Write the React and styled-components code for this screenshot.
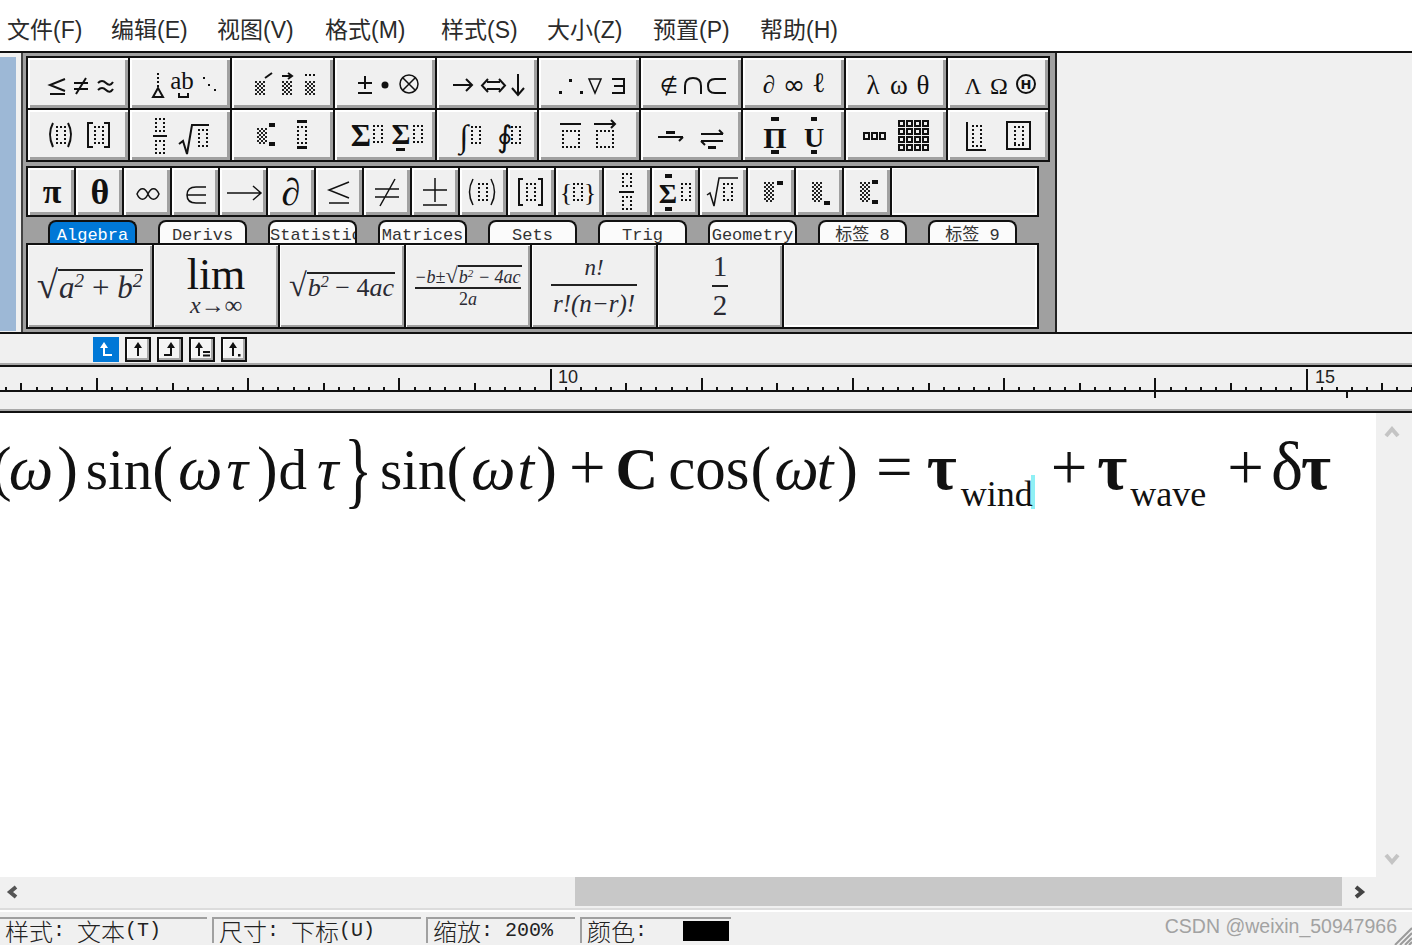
import React from "react";
import styled, { createGlobalStyle } from "styled-components";

const Global = createGlobalStyle`
  html, body { margin: 0; padding: 0; background: #f0f0f0; overflow: hidden; }
`;

const Page = styled.div`
  position: relative;
  width: 1412px;
  height: 945px;
  overflow: hidden;
  display: flex;
  flex-direction: column;
  background: #f0f0f0;
  font-family: "Liberation Sans", "Noto Sans CJK SC", sans-serif;
`;

const MenuBar = styled.div`
  height: 53px;
  flex: none;
  box-sizing: border-box;
  background: #fff;
  display: flex;
  align-items: flex-end;
  padding: 0 0 7px 7px;
  border-bottom: 2px solid #111;
`;

const MenuItem = styled.span`
  width: ${(p) => p.$w}px;
  flex: none;
  font-size: 23px;
  line-height: 28px;
  color: #2b2b2b;
  white-space: nowrap;
`;

const ToolArea = styled.div`
  height: 281px;
  flex: none;
  display: flex;
  box-sizing: border-box;
  border-bottom: 2px solid #111;
`;

const DockStrip = styled.div`
  width: 16px;
  margin: 4px 5px 1px 0;
  background: #9db8d6;
  flex: none;
`;

const Palette = styled.div`
  width: 1034px;
  flex: none;
  box-sizing: border-box;
  background: #a0a0a0;
  border-left: 2px solid #444;
  padding: 3px 0 0 3px;
  display: flex;
  flex-direction: column;
`;

const SideBlank = styled.div`
  flex: 1;
  border-left: 2px solid #222;
  background: #f0f0f0;
`;

const TemplateGrid = styled.div`
  width: 1024px;
  box-sizing: border-box;
  display: grid;
  grid-template-columns: repeat(10, 1fr);
  grid-auto-rows: 50px;
  gap: 2px;
  padding: 2px;
  background: #111;
`;

const SymbolRow = styled.div`
  width: 1013px;
  margin-top: 4px;
  box-sizing: border-box;
  display: grid;
  grid-template-columns: repeat(18, 46px) 1fr;
  grid-auto-rows: 47px;
  gap: 2px;
  padding: 2px;
  background: #111;
`;

const Btn = styled.div`
  display: flex;
  align-items: flex-start;
  justify-content: flex-start;
  overflow: hidden;
  background: #f0f0f0;
  box-shadow: inset 2px 2px 0 #fff, inset -3px -3px 0 #a0a0a0;
  svg { display: block; }
`;

const PlainCell = styled.div`
  background: #f0f0f0;
  box-shadow: inset 1px 1px 0 #fff, inset -2px -2px 0 #fff;
`;

const TabRow = styled.div`
  height: 23px;
  margin-top: 3px;
  display: flex;
  gap: 21px;
  padding-left: 22px;
`;

const Tab = styled.div`
  width: 89px;
  box-sizing: border-box;
  height: 23px;
  border: 2px solid #111;
  border-bottom: none;
  border-radius: 8px 8px 0 0;
  background: ${(p) => (p.$on ? "#0078d7" : "#fbfbfb")};
  color: ${(p) => (p.$on ? "#fff" : "#333")};
  font-family: "Liberation Mono", "Noto Sans CJK SC", monospace;
  font-size: 17px;
  line-height: 27px;
  text-align: center;
  white-space: nowrap;
  overflow: hidden;
`;

const FormulaGrid = styled.div`
  width: 1013px;
  box-sizing: border-box;
  display: grid;
  grid-template-columns: repeat(6, 124px) 1fr;
  grid-auto-rows: 82px;
  gap: 2px;
  padding: 2px;
  background: #111;
`;

const FormulaCell = styled.div`
  display: flex;
  flex-direction: column;
  align-items: center;
  justify-content: center;
  background: #f0f0f0;
  box-shadow: inset 1px 1px 0 #fff, inset -2px -2px 0 #a0a0a0;
  font-family: "Liberation Serif", serif;
  color: #2a2a33;
  white-space: nowrap;
  overflow: hidden;
`;

const Expr = styled.span`
  display: inline-flex;
  align-items: baseline;
  font-size: ${(p) => p.$size}px;
  font-style: ${(p) => (p.$up ? "normal" : "italic")};
  line-height: 1;
`;

const Upright = styled.span`
  font-style: normal;
`;

const Sup = styled.sup`
  font-size: 0.62em;
  line-height: 0;
  vertical-align: 0.55em;
`;

const RootSign = styled.span`
  font-style: normal;
  font-family: "Liberation Serif", serif;
  font-size: 1.25em;
  line-height: 0.8;
`;

const RootBody = styled.span`
  display: inline-block;
  border-top: 2px solid #222;
  padding: 1px 1px 0 1px;
  line-height: 1;
`;

const FracLine = styled.div`
  width: ${(p) => p.$w}px;
  height: 2px;
  margin: ${(p) => p.$m || 1}px 0;
  background: #222;
  flex: none;
`;

const LimWord = styled.div`
  font-size: 44px;
  line-height: 38px;
  color: #111;
`;

const LimSub = styled.div`
  font-size: 24px;
  line-height: 22px;
  font-style: italic;
`;

const ToolStrip = styled.div`
  height: 31px;
  flex: none;
  box-sizing: border-box;
  display: flex;
  gap: 6px;
  padding: 3px 0 0 93px;
  border-bottom: 2px solid #a8a8a8;
`;

const ToolBtn = styled.div`
  width: 26px;
  height: 25px;
  box-sizing: border-box;
  border: 2px solid ${(p) => (p.$on ? "#0078d7" : "#111")};
  background: ${(p) => (p.$on ? "#0078d7" : "#f4f4f4")};
  box-shadow: ${(p) => (p.$on ? "none" : "inset -2px -2px 0 #a8a8a8, inset 1px 1px 0 #fff")};
  color: ${(p) => (p.$on ? "#fff" : "#111")};
  display: flex;
  align-items: center;
  justify-content: center;
`;

const Ruler = styled.div`
  height: 48px;
  flex: none;
  box-sizing: border-box;
  border-top: 2px solid #111;
  border-bottom: 2px solid #111;
  box-shadow: inset 0 -2px 0 #a8a8a8;
  background: #f0f0f0;
  svg { display: block; }
`;

const DocRow = styled.div`
  height: 464px;
  flex: none;
  display: flex;
`;

const Doc = styled.div`
  flex: 1;
  min-width: 0;
  background: #fff;
  overflow: hidden;
  padding-top: 15px;
  white-space: nowrap;
  font-family: "Liberation Serif", serif;
  font-size: 57px;
  line-height: 80px;
  color: #111;
`;

const Term = styled.span`
  display: inline-block;
  margin-left: ${(p) => p.$ml || 0}px;
  font-style: ${(p) => (p.$it ? "italic" : "normal")};
  font-weight: ${(p) => (p.$b ? 700 : 400)};
  font-size: ${(p) => p.$size || 57}px;
  vertical-align: ${(p) => p.$drop || 0}px;
  transform: scaleX(${(p) => p.$sx || 1});
  line-height: 1;
`;

const Caret = styled.span`
  display: inline-block;
  width: 4px;
  height: 34px;
  background: #8ff0f5;
  vertical-align: -20px;
  margin-left: -2px;
`;

const VScroll = styled.div`
  width: 36px;
  flex: none;
  display: flex;
  flex-direction: column;
  justify-content: space-between;
  align-items: center;
  padding: 11px 4px 10px 0;
  box-sizing: border-box;
`;

const HScroll = styled.div`
  height: 33px;
  flex: none;
  display: flex;
  box-sizing: border-box;
  border-bottom: 2px solid #dcdcdc;
  padding-bottom: 2px;
`;

const HTrack = styled.div`
  width: 575px;
  flex: none;
  display: flex;
  align-items: center;
  padding-left: 6px;
  box-sizing: border-box;
`;

const HThumb = styled.div`
  width: 767px;
  flex: none;
  background: #c8c8c8;
`;

const HEnd = styled.div`
  flex: 1;
  display: flex;
  align-items: center;
  padding-left: 10px;
`;

const StatusBar = styled.div`
  flex: 1;
  display: flex;
  gap: 5px;
  padding-top: 5px;
  border-top: 2px solid #fff;
  box-sizing: border-box;
`;

const StatusCell = styled.div`
  width: ${(p) => p.$w}px;
  height: 26px;
  flex: none;
  box-sizing: border-box;
  border-top: 2px solid #a0a0a0;
  border-left: ${(p) => (p.$first ? "none" : "2px solid #a0a0a0")};
  padding-left: 5px;
  display: flex;
  align-items: center;
  font-family: "Liberation Mono", monospace;
  font-size: 20px;
  line-height: 24px;
  color: #222;
  white-space: pre;
  overflow: hidden;
`;

const Cn = styled.span`
  font-family: "Noto Sans CJK SC", sans-serif;
  font-size: 24px;
  font-weight: 300;
`;

const Swatch = styled.span`
  width: 46px;
  height: 20px;
  margin-left: 36px;
  background: #000;
  flex: none;
`;

const Watermark = styled.div`
  position: absolute;
  right: 15px;
  bottom: 7px;
  font-size: 19.5px;
  line-height: 24px;
  color: #a2a2a2;
  white-space: nowrap;
`;

const Grip = styled.svg`
  position: absolute;
  right: 0;
  bottom: 0;
`;

// small drawing bits for the template buttons
const S = ({ x, y, s = 22, b, serif, children }) => (
  <text
    x={x}
    y={y}
    fontSize={s}
    fontWeight={b ? 700 : 400}
    textAnchor="middle"
    fontFamily={serif ? "Liberation Serif, serif" : "DejaVu Sans, sans-serif"}
    fill="#111"
  >
    {children}
  </text>
);

// dotted placeholder box, 2px dots on a 4px pitch
const Slot = ({ x, y, w, h }) => {
  const dots = [];
  for (let c = 0; c <= w; c += 4) {
    dots.push(<rect key={"t" + c} x={x + c} y={y} width="2" height="2" />);
    dots.push(<rect key={"b" + c} x={x + c} y={y + h} width="2" height="2" />);
  }
  for (let r = 4; r < h; r += 4) {
    dots.push(<rect key={"l" + r} x={x} y={y + r} width="2" height="2" />);
    dots.push(<rect key={"r" + r} x={x + w} y={y + r} width="2" height="2" />);
  }
  return <g fill="#111" shapeRendering="crispEdges">{dots}</g>;
};

// dithered selection block
const Shade = ({ x, y, w, h }) => {
  const dots = [];
  for (let r = 0; r < h; r += 2) {
    for (let c = 0; c < w; c += 2) {
      if ((r + c) % 4 === 0) {
        dots.push(<rect key={r + "-" + c} x={x + c} y={y + r} width="2" height="2" />);
      }
    }
  }
  return <g fill="#222" shapeRendering="crispEdges">{dots}</g>;
};

const Bar = ({ x, y, w, h = 3 }) => <rect x={x} y={y} width={w} height={h} fill="#111" shapeRendering="crispEdges" />;

const L = ({ d, w = 2 }) => <path d={d} fill="none" stroke="#111" strokeWidth={w} />;

const Icon = ({ w = 100, h = 50, children }) => (
  <svg width={w} height={h} viewBox={`0 0 ${w} ${h}`}>
    {children}
  </svg>
);

const rowOne = [
  <>
    <L d="M37 21 L22 27 L37 33 M22 36 H37" />
    <L d="M46 25 H60 M46 31 H60 M58 20 L48 36" />
    <L d="M70 25 Q74 21 78 25 T85 24 M70 32 Q74 28 78 32 T85 31" />
  </>,
  <>
    <Bar x={27} y={15} w={2} h={2} />
    <Bar x={27} y={19} w={2} h={2} />
    <Bar x={27} y={23} w={2} h={2} />
    <Bar x={27} y={27} w={2} h={2} />
    <path d="M28 30 L23 39 H33 Z" fill="none" stroke="#111" strokeWidth="2" />
    <S x={52} y={31} s={25} serif>ab</S>
    <L d="M49 35 V39 H58 V35" />
    <Bar x={73} y={19} w={2} h={2} />
    <Bar x={78} y={26} w={2} h={2} />
    <Bar x={84} y={31} w={2} h={2} />
  </>,
  <>
    <Shade x={23} y={23} w={10} h={14} />
    <L d="M33 20 L40 15" />
    <Shade x={50} y={23} w={10} h={14} />
    <L d="M50 18 H60 M56 15 L60 18 L56 21" />
    <Shade x={73} y={23} w={10} h={14} />
    <Bar x={73} y={16} w={2} h={2} />
    <Bar x={77} y={16} w={2} h={2} />
    <Bar x={81} y={16} w={2} h={2} />
  </>,
  <>
    <L d="M23 25 H37 M30 18 V31 M23 35 H37" />
    <circle cx={50} cy={27} r={3.5} fill="#111" />
    <circle cx={74} cy={26} r={9} fill="none" stroke="#111" strokeWidth="1.5" />
    <L d="M68 20 L80 32 M80 20 L68 32" w={1.5} />
  </>,
  <>
    <L d="M16 27 H35 M29 21 L35 27 L29 33" />
    <path d="M50 24 H63 M50 31 H63 M51 21 L45 27.5 L51 34 M62 21 L68 27.5 L62 34" fill="none" stroke="#111" strokeWidth="2" />
    <L d="M81 16 V36 M75 30 L81 37 L87 30" />
  </>,
  <>
    <Bar x={20} y={33} w={3} h={3} />
    <Bar x={41} y={33} w={3} h={3} />
    <Bar x={30} y={21} w={3} h={3} />
    <L d="M50 21 H62 L56 35 Z" w={1.5} />
    <L d="M73 21 H85 V35 H73 M75 28 H85" />
  </>,
  <>
    <S x={28} y={35} s={21}>∉</S>
    <L d="M44 36 V28 Q44 20 52 20 Q60 20 60 28 V36" />
    <L d="M85 21 H74 Q67 21 67 28 Q67 35 74 35 H85" />
  </>,
  <>
    <S x={26} y={35} s={25} serif>∂</S>
    <S x={51} y={36} s={27}>∞</S>
    <S x={76} y={34} s={28} serif>ℓ</S>
  </>,
  <>
    <S x={27} y={36} s={27} serif>λ</S>
    <S x={53} y={36} s={27} serif>ω</S>
    <S x={77} y={36} s={27} serif>θ</S>
  </>,
  <>
    <S x={25} y={36} s={23} serif>Λ</S>
    <S x={51} y={36} s={24} serif>Ω</S>
    <circle cx={78} cy={26} r={9} fill="none" stroke="#111" strokeWidth="2" />
    <S x={78} y={31} s={13} b>H</S>
  </>,
];

const rowTwo = [
  <>
    <L d="M25 13 Q19 24 25 37" />
    <Slot x={28} y={16} w={8} h={16} />
    <L d="M40 13 Q46 24 40 37" />
    <L d="M65 13 H60 V37 H65 M76 13 H81 V37 H76" />
    <Slot x={66} y={16} w={8} h={16} />
  </>,
  <>
    <Slot x={25} y={8} w={8} h={12} />
    <Bar x={23} y={25} w={14} h={2} />
    <Slot x={25} y={30} w={8} h={12} />
    <L d="M49 34 L53 31 L57 44 L62 15 H79" />
    <Slot x={68} y={19} w={8} h={16} />
  </>,
  <>
    <Shade x={25} y={18} w={10} h={15} />
    <Bar x={37} y={13} w={6} h={4} />
    <Bar x={37} y={32} w={6} h={4} />
    <Bar x={65} y={10} w={10} h={3} />
    <Slot x={65} y={16} w={8} h={16} />
    <Bar x={65} y={36} w={10} h={3} />
  </>,
  <>
    <S x={26} y={36} s={31} b serif>Σ</S>
    <Slot x={38} y={15} w={8} h={16} />
    <S x={66} y={34} s={29} b serif>Σ</S>
    <Bar x={61} y={38} w={9} h={3} />
    <Slot x={78} y={15} w={8} h={16} />
  </>,
  <>
    <S x={27} y={37} s={32} serif>∫</S>
    <Slot x={34} y={16} w={8} h={16} />
    <S x={68} y={37} s={30} serif>∮</S>
    <Slot x={74} y={16} w={8} h={16} />
  </>,
  <>
    <Bar x={21} y={13} w={21} h={2} />
    <Slot x={23} y={20} w={16} h={16} />
    <L d="M55 14 H76 M72 10 L76 14 L72 18" />
    <Slot x={57} y={20} w={16} h={16} />
  </>,
  <>
    <L d="M17 27 H42 M38 31 L42 27" />
    <Bar x={25} y={21} w={9} h={3} />
    <L d="M60 24 H82 M78 20 L82 24 M60 31 H82 M60 31 L64 35" />
    <Bar x={67} y={36} w={8} h={3} />
  </>,
  <>
    <Bar x={28} y={7} w={8} h={4} />
    <S x={32} y={38} s={30} b serif>Π</S>
    <Bar x={28} y={40} w={8} h={4} />
    <Bar x={68} y={7} w={6} h={4} />
    <S x={71} y={37} s={28} b serif>U</S>
    <Bar x={68} y={40} w={6} h={4} />
  </>,
  <>
    {[0, 1, 2].map((c) => (
      <rect key={c} x={18 + c * 8} y={23} width={5} height={6} fill="none" stroke="#111" strokeWidth="2" />
    ))}
    {[0, 1, 2, 3].map((r) =>
      [0, 1, 2, 3].map((c) => (
        <rect key={r + "" + c} x={53 + c * 8} y={11 + r * 8} width={5} height={5} fill="none" stroke="#111" strokeWidth="2" />
      ))
    )}
  </>,
  <>
    <L d="M19 12 V40 H38" />
    <Slot x={24} y={15} w={8} h={20} />
    <rect x={59} y={12} width={23} height={27} fill="none" stroke="#111" strokeWidth="2" />
    <Slot x={66} y={16} w={8} h={18} />
  </>,
];

const symbols = [
  <S x={24} y={35} s={34} b serif>π</S>,
  <S x={24} y={36} s={36} serif b>θ</S>,
  <L d="M13 26 C16 19 21 19 24 26 C27 33 32 33 35 26 C32 19 27 19 24 26 C21 33 16 33 13 26 Z" w={1.5} />,
  <>
    <L d="M34 19 H24 Q15 19 15 27 Q15 35 24 35 H34 M15 27 H34" w={1.5} />
  </>,
  <L d="M7 25 H41 M33 18 L41 25 L33 32" w={1.5} />,
  <S x={23} y={37} s={38} serif>∂</S>,
  <L d="M33 14 L13 22 L33 30 M13 35 H33" w={1.5} />,
  <L d="M11 21 H35 M11 29 H35 M31 11 L16 38" w={1.5} />,
  <L d="M11 22 H35 M23 10 V34 M11 37 H35" w={1.5} />,
  <>
    <L d="M13 11 Q6 24 13 37" w={1.5} />
    <Slot x={18} y={15} w={8} h={16} />
    <L d="M31 11 Q38 24 31 37" w={1.5} />
  </>,
  <>
    <L d="M15 11 H11 V37 H15 M30 11 H34 V37 H30" />
    <Slot x={18} y={15} w={8} h={16} />
  </>,
  <>
    <S x={10} y={33} s={26} serif>{"{"}</S>
    <Slot x={17} y={15} w={8} h={16} />
    <S x={34} y={33} s={26} serif>{"}"}</S>
  </>,
  <>
    <Slot x={18} y={5} w={8} h={12} />
    <Bar x={15} y={23} w={15} h={2} />
    <Slot x={18} y={28} w={8} h={12} />
  </>,
  <>
    <Bar x={13} y={6} w={7} h={4} />
    <S x={16} y={35} s={28} b serif>Σ</S>
    <Bar x={13} y={39} w={7} h={4} />
    <Slot x={29} y={15} w={8} h={16} />
  </>,
  <>
    <L d="M7 27 L10 25 L14 38 L19 10 H38" w={1.5} />
    <Slot x={23} y={15} w={8} h={16} />
  </>,
  <>
    <Shade x={16} y={14} w={10} h={20} />
    <Bar x={29} y={13} w={6} h={4} />
  </>,
  <>
    <Shade x={16} y={14} w={10} h={20} />
    <Bar x={28} y={33} w={6} h={4} />
  </>,
  <>
    <Shade x={16} y={14} w={10} h={20} />
    <Bar x={28} y={12} w={6} h={4} />
    <Bar x={28} y={32} w={6} h={4} />
  </>,
];

const tabs = ["Algebra", "Derivs", "Statistics", "Matrices", "Sets", "Trig", "Geometry", "标签 8", "标签 9"];

const menus = [
  ["文件(F)", 104],
  ["编辑(E)", 106],
  ["视图(V)", 108],
  ["格式(M)", 116],
  ["样式(S)", 106],
  ["大小(Z)", 106],
  ["预置(P)", 107],
  ["帮助(H)", 100],
];

// up arrow with a stem at x, plus whatever marks the alignment mode
const ArrowGlyph = ({ x = 8, extra }) => (
  <svg width="18" height="17" viewBox="0 0 18 17">
    <path d={`M${x} 1 L${x - 4} 7 H${x + 4} Z`} fill="currentColor" />
    <path d={`M${x} 6 V15`} stroke="currentColor" strokeWidth="2" />
    {extra}
  </svg>
);

const RulerMarks = () => {
  const ticks = [];
  const step = 15.12;
  for (let i = -6; i < 95; i++) {
    const x = 96 + i * step;
    let h = 4;
    if (i % 5 === 0) h = 8;
    if (i % 10 === 0) h = 13;
    if (i === 30 || i === 80) h = 22;
    ticks.push(<rect key={i} x={Math.round(x)} y={24 - h} width="2" height={h} fill="#111" />);
  }
  return (
    <svg width="1412" height="43">
      <g shapeRendering="crispEdges">
        {ticks}
        <rect x="0" y="23" width="1412" height="2" fill="#111" />
        <rect x="1154" y="25" width="2" height="6" fill="#111" />
        <rect x="1346" y="25" width="2" height="6" fill="#111" />
      </g>
      <text x="558" y="16" fontSize="18" fontFamily="Liberation Sans, sans-serif" fill="#222">10</text>
      <text x="1315" y="16" fontSize="18" fontFamily="Liberation Sans, sans-serif" fill="#222">15</text>
    </svg>
  );
};

const Chevron = ({ d, c }) => (
  <svg width="18" height="16" viewBox="0 0 18 16">
    <path d={d} fill="none" stroke={c} strokeWidth="4" />
  </svg>
);

export default function App() {
  return (
    <Page>
      <Global />
      <MenuBar>
        {menus.map(([m, w]) => (
          <MenuItem key={m} $w={w}>{m}</MenuItem>
        ))}
      </MenuBar>

      <ToolArea>
        <DockStrip />
        <Palette>
          <TemplateGrid>
            {rowOne.map((icon, i) => (
              <Btn key={i}>
                <Icon>{icon}</Icon>
              </Btn>
            ))}
            {rowTwo.map((icon, i) => (
              <Btn key={i}>
                <Icon>{icon}</Icon>
              </Btn>
            ))}
          </TemplateGrid>

          <SymbolRow>
            {symbols.map((icon, i) => (
              <Btn key={i}>
                <Icon w={46} h={47}>{icon}</Icon>
              </Btn>
            ))}
            <PlainCell />
          </SymbolRow>

          <TabRow>
            {tabs.map((t, i) => (
              <Tab key={t} $on={i === 0}>{t}</Tab>
            ))}
          </TabRow>

          <FormulaGrid>
            <FormulaCell>
              <Expr $size={31}>
                <RootSign>√</RootSign>
                <RootBody>a<Sup>2</Sup> <Upright>+</Upright> b<Sup>2</Sup></RootBody>
              </Expr>
            </FormulaCell>
            <FormulaCell>
              <LimWord>lim</LimWord>
              <LimSub>x→∞</LimSub>
            </FormulaCell>
            <FormulaCell>
              <Expr $size={26}>
                <RootSign>√</RootSign>
                <RootBody>b<Sup>2</Sup> <Upright>− 4</Upright>ac</RootBody>
              </Expr>
            </FormulaCell>
            <FormulaCell>
              <Expr $size={18}>
                −b±<RootSign>√</RootSign>
                <RootBody>b<Sup>2</Sup> − 4ac</RootBody>
              </Expr>
              <FracLine $w={106} />
              <Expr $size={18}><Upright>2</Upright>a</Expr>
            </FormulaCell>
            <FormulaCell>
              <Expr $size={23}>n!</Expr>
              <FracLine $w={86} $m={5} />
              <Expr $size={25}>r!(n−r)!</Expr>
            </FormulaCell>
            <FormulaCell>
              <Expr $size={29} $up>1</Expr>
              <FracLine $w={16} $m={4} />
              <Expr $size={29} $up>2</Expr>
            </FormulaCell>
            <PlainCell />
          </FormulaGrid>
        </Palette>
        <SideBlank />
      </ToolArea>

      <ToolStrip>
        <ToolBtn $on>
          <ArrowGlyph x={7} extra={<path d="M6 14 H15" stroke="currentColor" strokeWidth="2" />} />
        </ToolBtn>
        <ToolBtn><ArrowGlyph x={9} /></ToolBtn>
        <ToolBtn>
          <ArrowGlyph x={10} extra={<path d="M3 14 H10" stroke="currentColor" strokeWidth="2" />} />
        </ToolBtn>
        <ToolBtn>
          <ArrowGlyph x={6} extra={<path d="M10 11 H17 M10 14.5 H17" stroke="currentColor" strokeWidth="2" />} />
        </ToolBtn>
        <ToolBtn>
          <ArrowGlyph x={8} extra={<path d="M13 13 H15.5 V15.5 H13 Z" fill="currentColor" />} />
        </ToolBtn>
      </ToolStrip>

      <Ruler>
        <RulerMarks />
      </Ruler>

      <DocRow>
        <Doc>
          <Term $ml={-9} $size={62}>(</Term>
          <Term $ml={-3} $size={63} $it>ω</Term>
          <Term $ml={4} $size={62}>)</Term>
          <Term $ml={8}>sin</Term>
          <Term $size={62}>(</Term>
          <Term $ml={5} $size={63} $it>ω</Term>
          <Term $ml={4} $size={60} $it>τ</Term>
          <Term $ml={9} $size={62}>)</Term>
          <Term $ml={1}>d</Term>
          <Term $it $ml={10} $size={60}>τ</Term>
          <Term $ml={-1} $size={84} $sx={0.7} $drop={-9}>{"}"}</Term>
          <Term $ml={2}>sin</Term>
          <Term $size={62}>(</Term>
          <Term $ml={4} $size={63} $it>ω</Term>
          <Term $ml={2} $size={60} $it>t</Term>
          <Term $ml={2} $size={62}>)</Term>
          <Term $ml={12} $size={65}>+</Term>
          <Term $ml={10} $size={59} $b>C</Term>
          <Term $ml={10} $size={61}>cos</Term>
          <Term $ml={1} $size={62}>(</Term>
          <Term $ml={3} $size={63} $it>ω</Term>
          <Term $ml={-2} $size={60} $it>t</Term>
          <Term $ml={4} $size={62}>)</Term>
          <Term $ml={18} $size={65}>=</Term>
          <Term $ml={14} $size={65} $b>τ</Term>
          <Term $ml={4} $size={36} $drop={-17}>wind</Term>
          <Caret />
          <Term $ml={16} $size={65}>+</Term>
          <Term $ml={10} $size={65} $b>τ</Term>
          <Term $ml={3} $size={36} $drop={-17}>wave</Term>
          <Term $ml={21} $size={65}>+</Term>
          <Term $ml={7} $size={68}>δ</Term>
          <Term $ml={-2} $size={65} $b>τ</Term>
        </Doc>
        <VScroll>
          <Chevron d="M3 12 L9 5 L15 12" c="#c4c4c4" />
          <Chevron d="M3 4 L9 11 L15 4" c="#c4c4c4" />
        </VScroll>
      </DocRow>

      <HScroll>
        <HTrack>
          <svg width="14" height="16" viewBox="0 0 14 16">
            <path d="M10 3 L4 8 L10 13" fill="none" stroke="#555" strokeWidth="4" />
          </svg>
        </HTrack>
        <HThumb />
        <HEnd>
          <svg width="14" height="16" viewBox="0 0 14 16">
            <path d="M4 3 L10 8 L4 13" fill="none" stroke="#444" strokeWidth="4" />
          </svg>
        </HEnd>
      </HScroll>

      <StatusBar>
        <StatusCell $w={207} $first><Cn>样式</Cn>: <Cn>文本</Cn>(T)</StatusCell>
        <StatusCell $w={209}><Cn>尺寸</Cn>: <Cn>下标</Cn>(U)</StatusCell>
        <StatusCell $w={149}><Cn>缩放</Cn>: 200%</StatusCell>
        <StatusCell $w={151}><Cn>颜色</Cn>:<Swatch /></StatusCell>
      </StatusBar>

      <Watermark>CSDN @weixin_50947966</Watermark>
      <Grip width="18" height="18" viewBox="0 0 18 18">
        <path d="M18 1 L1 18 M18 6 L6 18 M18 11 L11 18 M18 15 L15 18" stroke="#9a9a9a" strokeWidth="2" />
      </Grip>
    </Page>
  );
}
